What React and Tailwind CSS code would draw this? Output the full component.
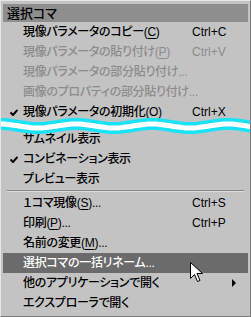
import React from "react";

function Check() {
  return (
    <svg width="8" height="7" viewBox="0 0 8 7" className="block">
      <path d="M0.5 3.5 L3 6 L7.5 0.8" fill="none" stroke="#000" strokeWidth="2" />
    </svg>
  );
}

function U({ children }) {
  return <span className="underline underline-offset-[2px] decoration-1">{children}</span>;
}

function Row({ check, label, shortcut, disabled, highlight, submenu }) {
  const color = highlight ? "text-white" : disabled ? "text-[#8c8c8c]" : "text-black";
  return (
    <div
      className={`grid grid-cols-[20px_1fr_56px] h-[20px] items-center ${color} ${
        highlight ? "bg-[#6b6b6b]" : ""
      }`}
    >
      <div className="pl-[7px] flex items-center">{check ? <Check /> : null}</div>
      <div className="whitespace-nowrap leading-none tracking-[-0.3px]">{label}</div>
      <div className="whitespace-nowrap leading-none flex items-center">
        {shortcut}
        {submenu ? (
          <svg width="5" height="8" viewBox="0 0 5 8" className="ml-[40px]">
            <path d="M0 0 L4 4 L0 8 Z" fill="#000" />
          </svg>
        ) : null}
      </div>
    </div>
  );
}

function Wave() {
  const P = 76;
  const A = 2;
  const c = 12;
  const phase = 0;
  let d = "";
  for (let x = -4; x <= 256; x += 2) {
    const y = c - A * Math.cos((2 * Math.PI * (x - phase)) / P);
    d += (x === -4 ? "M" : "L") + x + " " + y.toFixed(2) + " ";
  }
  return (
    <svg width="251" height="24" viewBox="0 0 251 24" className="block">
      <path d={d} fill="none" stroke="#1ae3f7" strokeWidth="12" />
      <path d={d} fill="none" stroke="#ffffff" strokeWidth="5" />
    </svg>
  );
}

export default function App() {
  return (
    <div className="relative w-[251px] h-[317px] bg-[#c3c3c3] border border-t-[#e6e6e6] border-l-[#e6e6e6] border-r-[#7a7a7a] border-b-[#7a7a7a] pt-[3px] px-[2px] pb-[3px] text-[12px] font-medium [font-family:'Liberation_Sans','Noto_Sans_CJK_JP',sans-serif] [font-feature-settings:'palt'] overflow-hidden">
      <div className="h-[18px] bg-[#8e8e8e] flex items-center pl-[4px] text-black leading-none text-[13px]">
        選択コマ
      </div>
      <Row label={<>現像パラメータのコピー(<U>C</U>)</>} shortcut="Ctrl+C" />
      <Row disabled label={<>現像パラメータの貼り付け(<U>P</U>)</>} shortcut="Ctrl+V" />
      <Row disabled label="現像パラメータの部分貼り付け..." />
      <Row disabled label="画像のプロパティの部分貼り付け..." />
      <Row check label="現像パラメータの初期化(O)" shortcut="Ctrl+X" />
      <div className="relative h-[7px]">
        <div className="absolute left-[-3px] top-[-8px]">
          <Wave />
        </div>
      </div>
      <Row label="サムネイル表示" />
      <Row check label="コンビネーション表示" />
      <Row label="プレビュー表示" />
      <div className="h-[4px] flex items-center px-[4px]">
        <div className="w-full h-[2px] border-t border-t-[#858585] border-b border-b-[#dedede]" />
      </div>
      <Row label={<>１コマ現像(<U>S</U>)...</>} shortcut="Ctrl+S" />
      <Row label={<>印刷(<U>P</U>)...</>} shortcut="Ctrl+P" />
      <Row label={<>名前の変更(<U>M</U>)...</>} />
      <Row highlight label="選択コマの一括リネーム..." />
      <Row label="他のアプリケーションで開く" submenu />
      <Row label="エクスプローラで開く" />

      <svg
        width="14"
        height="21"
        viewBox="0 0 14 21"
        className="absolute left-[189px] top-[261px]"
      >
        <path
          d="M0.5 0.5 L0.5 16.5 L4.5 12.5 L7.5 19.5 L10 18.5 L7 11.5 L12.5 11.5 Z"
          fill="#fff"
          stroke="#000"
          strokeWidth="1"
          strokeLinejoin="miter"
        />
      </svg>
    </div>
  );
}
